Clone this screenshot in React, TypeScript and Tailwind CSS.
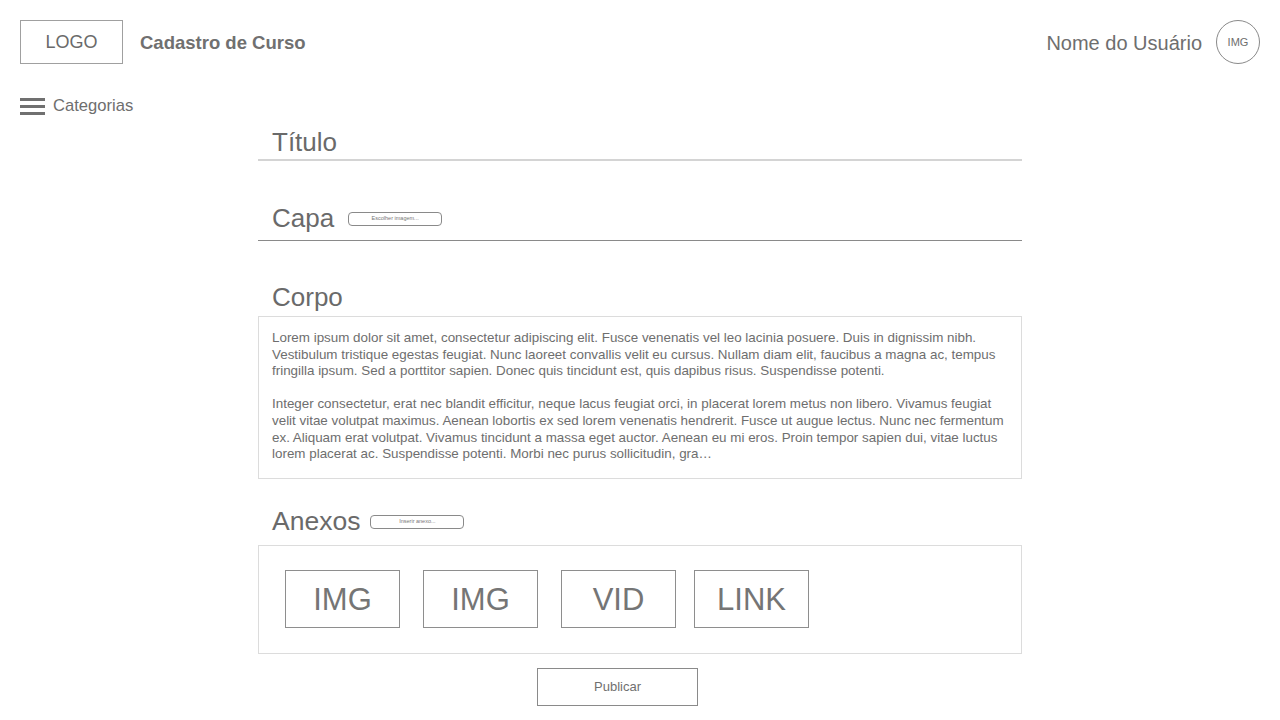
import React from "react";

const font = { fontFamily: '"Liberation Sans", Arial, sans-serif' };

function SmallBtn({ label }: { label: string }) {
  return (
    <div className="w-[94px] h-[14px] rounded-[4px] border border-[#8a8a8a] flex items-center justify-center text-[5.5px] leading-none text-[#777]">
      {label}
    </div>
  );
}

function Item({ label }: { label: string }) {
  return (
    <div className="w-[115px] h-[58px] border border-[#8e8e8e] flex items-center justify-center text-[31px] leading-none text-[#757575]">
      {label}
    </div>
  );
}

export default function App() {
  return (
    <div className="w-[1280px] h-[720px] bg-white text-[#707070] overflow-hidden" style={font}>
      <header className="flex items-center justify-between px-5 pt-5">
        <div className="flex items-center">
          <div className="w-[103px] h-[44px] border border-[#a0a0a0] flex items-center justify-center text-[18px] text-[#6a6a6a]">
            LOGO
          </div>
          <div className="ml-[17px] mt-[2px] text-[18.5px] font-bold text-[#707070]">Cadastro de Curso</div>
        </div>
        <div className="flex items-center">
          <div className="mt-[2px] text-[20px] text-[#6e6e6e]">Nome do Usuário</div>
          <div className="ml-[14px] w-[44px] h-[44px] rounded-full border border-[#8a8a8a] flex items-center justify-center text-[11px] text-[#6e6e6e]">
            IMG
          </div>
        </div>
      </header>

      <div className="flex items-center px-5 mt-[32px] h-[20px]">
        <div className="flex flex-col gap-[4px] w-[25px]">
          <div className="h-[3px] bg-[#707070]" />
          <div className="h-[3px] bg-[#707070]" />
          <div className="h-[3px] bg-[#707070]" />
        </div>
        <span className="ml-[8px] text-[16.6px] text-[#6e6e6e]">Categorias</span>
      </div>

      <main className="w-[764px] ml-[258px] mt-[11px]">
        <div className="border-b-2 border-[#d4d4d4] pb-[2px] pl-[14px]">
          <div className="text-[26px] leading-[30px] text-[#6a6a6a]">Título</div>
        </div>

        <div className="mt-[42px] border-b border-[#8a8a8a] pb-[7px] pl-[14px] flex items-center">
          <div className="text-[26px] leading-[30px] text-[#6a6a6a]">Capa</div>
          <div className="ml-[14px] mt-[2px]">
            <SmallBtn label="Escolher imagem..." />
          </div>
        </div>

        <div className="mt-[41px] pl-[14px] text-[26px] leading-[30px] text-[#6a6a6a]">Corpo</div>
        <div className="mt-[4px] h-[163px] border border-[#dcdcdc] pt-[13px] pl-[13px] pr-[10px] text-[13.4px] leading-[16.6px] text-[#6e6e6e] whitespace-nowrap">
          <p>Lorem ipsum dolor sit amet, consectetur adipiscing elit. Fusce venenatis vel leo lacinia posuere. Duis in dignissim nibh.</p>
          <p>Vestibulum tristique egestas feugiat. Nunc laoreet convallis velit eu cursus. Nullam diam elit, faucibus a magna ac, tempus</p>
          <p>fringilla ipsum. Sed a porttitor sapien. Donec quis tincidunt est, quis dapibus risus. Suspendisse potenti.</p>
          <p>&nbsp;</p>
          <p>Integer consectetur, erat nec blandit efficitur, neque lacus feugiat orci, in placerat lorem metus non libero. Vivamus feugiat</p>
          <p>velit vitae volutpat maximus. Aenean lobortis ex sed lorem venenatis hendrerit. Fusce ut augue lectus. Nunc nec fermentum</p>
          <p>ex. Aliquam erat volutpat. Vivamus tincidunt a massa eget auctor. Aenean eu mi eros. Proin tempor sapien dui, vitae luctus</p>
          <p>lorem placerat ac. Suspendisse potenti. Morbi nec purus sollicitudin, gra…</p>
        </div>

        <div className="mt-[27px] pl-[14px] flex items-center">
          <div className="text-[26.5px] leading-[30px] text-[#6a6a6a]">Anexos</div>
          <div className="ml-[10px] mt-[2px]">
            <SmallBtn label="Inserir anexo..." />
          </div>
        </div>

        <div className="mt-[9px] h-[109px] border border-[#dcdcdc] pl-[26px] pt-[24px] flex items-start">
          <Item label="IMG" />
          <div className="ml-[23px]"><Item label="IMG" /></div>
          <div className="ml-[23px]"><Item label="VID" /></div>
          <div className="ml-[18px]"><Item label="LINK" /></div>
        </div>

        <div className="mt-[14px] ml-[279px] w-[161px] h-[38px] border border-[#8a8a8a] flex items-center justify-center text-[13px] text-[#707070]">
          Publicar
        </div>
      </main>
    </div>
  );
}
